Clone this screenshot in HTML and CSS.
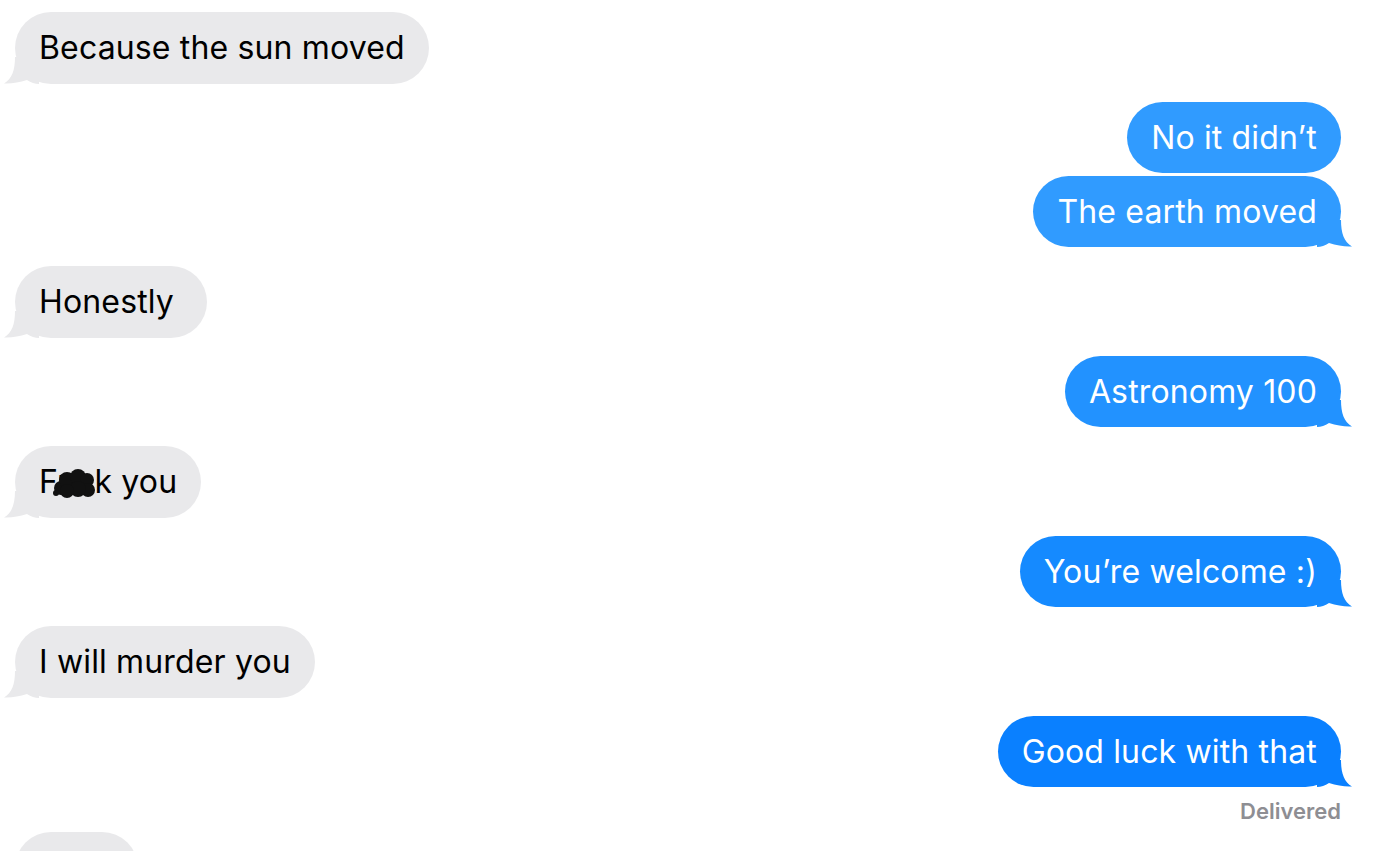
FILE: index.html
```html
<!DOCTYPE html>
<html lang="en">
<head>
    <meta charset="UTF-8">
    <meta name="viewport" content="width=device-width, initial-scale=1.0">
    <title>Messages</title>
    <link rel="stylesheet" href="styles.css">
</head>
<body>
    <div id="thread">
        <div class="msg in">Because the sun moved<svg class="tail" viewBox="0 0 35 27" width="35" height="27"><path d="M0 0H24C24 13 27 22 35 26.5C28 27 20 25.5 12 23C8 25.5 4 27 0 27Z"/></svg></div>

        <div class="msg out shade-1">No it didn’t</div>
        <div class="msg out shade-1">The earth moved<svg class="tail" viewBox="0 0 35 27" width="35" height="27"><path d="M0 0H24C24 13 27 22 35 26.5C28 27 20 25.5 12 23C8 25.5 4 27 0 27Z"/></svg></div>

        <div class="msg in">Honestly <svg class="tail" viewBox="0 0 35 27" width="35" height="27"><path d="M0 0H24C24 13 27 22 35 26.5C28 27 20 25.5 12 23C8 25.5 4 27 0 27Z"/></svg></div>

        <div class="msg out shade-2">Astronomy 100<svg class="tail" viewBox="0 0 35 27" width="35" height="27"><path d="M0 0H24C24 13 27 22 35 26.5C28 27 20 25.5 12 23C8 25.5 4 27 0 27Z"/></svg></div>

        <div class="msg in">F<span class="blot">uc<svg class="scribble" viewBox="0 0 42 32" width="42" height="32"><circle cx="8" cy="21" r="7"/><circle cx="14" cy="13" r="8"/><circle cx="25" cy="10" r="8"/><circle cx="34" cy="13" r="7"/><circle cx="35" cy="23" r="7"/><circle cx="25" cy="22" r="8"/><circle cx="14" cy="24" r="7"/><circle cx="3" cy="26" r="3"/></svg></span>k you<svg class="tail" viewBox="0 0 35 27" width="35" height="27"><path d="M0 0H24C24 13 27 22 35 26.5C28 27 20 25.5 12 23C8 25.5 4 27 0 27Z"/></svg></div>

        <div class="msg out shade-3">You’re welcome :)<svg class="tail" viewBox="0 0 35 27" width="35" height="27"><path d="M0 0H24C24 13 27 22 35 26.5C28 27 20 25.5 12 23C8 25.5 4 27 0 27Z"/></svg></div>

        <div class="msg in">I will murder you<svg class="tail" viewBox="0 0 35 27" width="35" height="27"><path d="M0 0H24C24 13 27 22 35 26.5C28 27 20 25.5 12 23C8 25.5 4 27 0 27Z"/></svg></div>

        <div class="msg out shade-4">Good luck with that<svg class="tail" viewBox="0 0 35 27" width="35" height="27"><path d="M0 0H24C24 13 27 22 35 26.5C28 27 20 25.5 12 23C8 25.5 4 27 0 27Z"/></svg></div>
        <div class="status">Delivered</div>

        <div class="msg in next">Wow</div>
    </div>
</body>
</html>
```

FILE: styles.css
```css
body {
    margin: 0;
    padding: 0;
    background: #fff;
    font-family: Inter, "Noto Sans", sans-serif;
    overflow: hidden;
}

#thread {
    display: flex;
    flex-direction: column;
    padding: 12px 40px 0 15px;
}

.msg {
    position: relative;
    padding: 16px 24px;
    font-size: 32px;
    line-height: 40px;
    letter-spacing: 0.15px;
    border-radius: 36px;
    background: var(--bg);
    fill: var(--bg);
    white-space: pre;
}

.msg.in {
    --bg: #e9e9eb;
    align-self: flex-start;
    color: #000;
    margin-top: 19px;
}

.msg.in:first-child {
    margin-top: 0;
}

.msg.out {
    align-self: flex-end;
    color: #fff;
    line-height: 39px;
    margin-top: 18px;
}

.msg.out + .msg.out {
    margin-top: 3px;
}

.shade-1 { --bg: #309bff; }
.shade-2 { --bg: #2292ff; }
.shade-3 { --bg: #158aff; }
.shade-4 { --bg: #0a80ff; }

.tail {
    position: absolute;
    bottom: 0;
    display: block;
}

.out .tail {
    right: -11px;
}

.in .tail {
    left: -11px;
    transform: scaleX(-1);
}

/* scribbled-out letters */
.blot {
    position: relative;
}

.scribble {
    position: absolute;
    left: -4px;
    top: 5px;
    fill: #111;
}

.status {
    align-self: flex-end;
    margin-top: 11px;
    font-size: 22px;
    line-height: 26px;
    font-weight: 600;
    color: #8e8e93;
}

.msg.next {
    margin-top: 8px;
}
```
